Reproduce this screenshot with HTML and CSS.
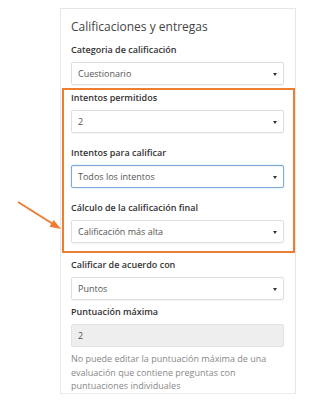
FILE: index.html
```html
<!DOCTYPE html>
<html lang="es">
<head>
    <meta charset="UTF-8">
    <meta name="viewport" content="width=device-width, initial-scale=1.0">
    <title>Calificaciones y entregas</title>
    <link rel="stylesheet" href="styles.css">
</head>
<body>

    <div class="panel">
        <h2 class="title">Calificaciones y entregas</h2>

        <div class="label">Categoria de calificación</div>
        <div class="select">Cuestionario<span class="caret"></span></div>

        <div class="highlight">
            <div class="label">Intentos permitidos</div>
            <div class="select">2<span class="caret"></span></div>

            <div class="label spaced">Intentos para calificar</div>
            <div class="select focused">Todos los intentos<span class="caret"></span></div>

            <div class="label spaced">Cálculo de la calificación final</div>
            <div class="select">Calificación más alta<span class="caret"></span></div>
        </div>

        <div class="label after-box">Calificar de acuerdo con</div>
        <div class="select">Puntos<span class="caret"></span></div>

        <div class="label after-select">Puntuación máxima</div>
        <div class="input disabled">2</div>

        <p class="help">No puede editar la puntuación máxima de una evaluación que contiene preguntas con puntuaciones individuales</p>
    </div>

    <!-- Pfeil zur Markierung -->
    <svg class="arrow" width="60" height="50" viewBox="0 0 60 50">
        <line x1="3" y1="2" x2="38" y2="24" stroke="#ed7d31" stroke-width="2"/>
        <polygon points="46,29 34.5,26.7 38.7,19.9" fill="#ed7d31"/>
    </svg>

</body>
</html>
```

FILE: styles.css
```css
body {
    margin: 0;
    background-color: #fff;
    font-family: 'Open Sans', 'DejaVu Sans', sans-serif;
    color: #333;
}

.panel {
    width: 236px;
    margin: 8px 0 0 60px;
    padding: 8px 11px 0 10px;
    border: 1px solid #e6e6e6;
    border-bottom-color: #ececec;
    box-sizing: border-box;
}

.title {
    margin: 0 0 6px 0;
    font-size: 12px;
    line-height: 20px;
    font-weight: 400;
    color: #444;
}

.label {
    font-size: 9px;
    line-height: 14px;
    font-weight: 600;
    color: #333;
    margin-bottom: 5px;
}

.label.spaced {
    margin-top: 13px;
}

.label.after-box {
    margin-top: 5px;
}

.label.after-select {
    margin-top: 5px;
}

.select,
.input {
    position: relative;
    height: 23px;
    padding: 0 6px;
    border: 1px solid #dedede;
    border-radius: 2px;
    box-sizing: border-box;
    font-size: 9px;
    line-height: 21px;
    color: #555;
    background-color: #fff;
    box-shadow: 0 1px 1px rgba(0,0,0,0.04);
}

.select.focused {
    border-color: #7fa9d6;
    box-shadow: inset 0 1px 1px rgba(0,0,0,0.06), 0 0 2px rgba(102,175,233,0.5);
}

.input.disabled {
    background-color: #eeeeee;
    border-color: #e2e2e2;
    box-shadow: none;
}

.caret {
    position: absolute;
    right: 6px;
    top: 10px;
    width: 0;
    height: 0;
    border-left: 2px solid transparent;
    border-right: 2px solid transparent;
    border-top: 3px solid #333;
}

.highlight {
    margin: 3px -11px 0 -9px;
    padding: 1px 9px 8px 7px;
    border: 2px solid #ed7d31;
}

.help {
    margin: 5px 0 0 0;
    font-size: 9px;
    line-height: 13.5px;
    color: #888;
}

.arrow {
    position: absolute;
    left: 15px;
    top: 200px;
}
```
